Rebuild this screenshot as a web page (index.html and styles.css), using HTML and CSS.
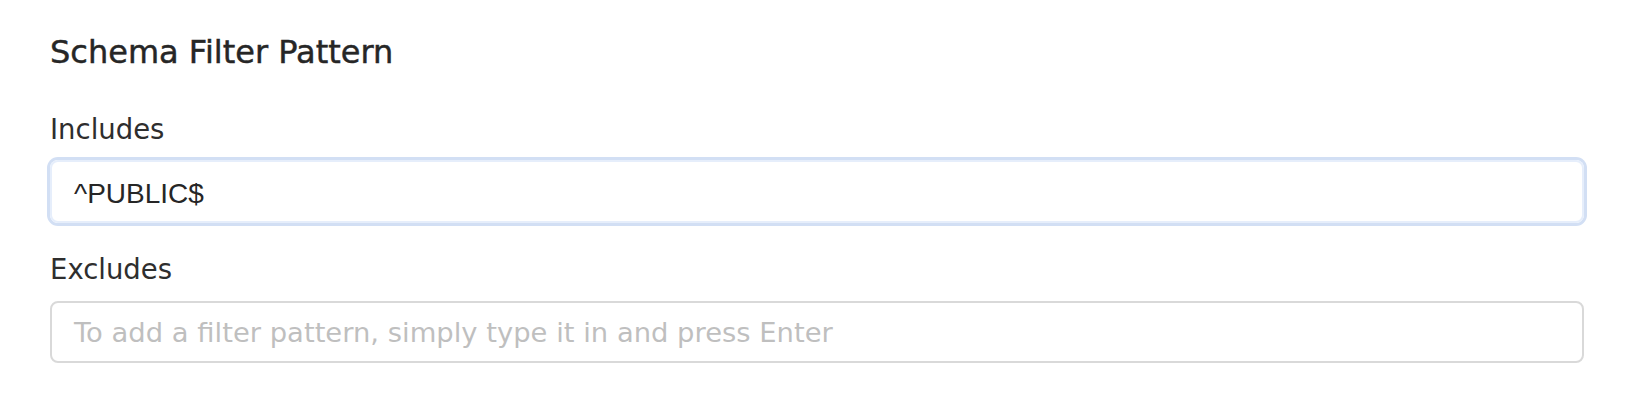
FILE: index.html
```html
<!DOCTYPE html>
<html>
<head>
<meta charset="utf-8">
<link rel="stylesheet" href="styles.css">
</head>
<body>
<div class="page">
  <h2 class="title">Schema Filter Pattern</h2>
  <div class="field">
    <label class="label">Includes</label>
    <div class="input focused"><span class="value">^PUBLIC$</span></div>
  </div>
  <div class="field">
    <label class="label">Excludes</label>
    <div class="input"><span class="placeholder">To add a filter pattern, simply type it in and press Enter</span></div>
  </div>
</div>
</body>
</html>
```
FILE: styles.css
```css
html, body { margin: 0; padding: 0; background: #fff; }
.page {
  padding: 32px 0 0 50px;
  width: 1534px;
  font-family: "DejaVu Sans", Verdana, sans-serif;
}
.title {
  margin: 0;
  font-size: 32px;
  font-weight: normal;
  -webkit-text-stroke: 0.45px #262626;
  line-height: 40px;
  color: #262626;
}
.field { display: flex; flex-direction: column; }
.field + .field { margin-top: 28.5px; }
.label {
  margin-top: 39px;
  font-size: 27.5px;
  line-height: 36px;
  color: #2e2e2e;
}
.field + .field .label { margin-top: 0; }
.input {
  margin-top: 12.5px;
  height: 62px;
  box-sizing: border-box;
  border: 2px solid #d9d9d9;
  border-radius: 8px;
  display: flex;
  align-items: center;
  padding: 0 22px;
}
.field + .field .input { margin-top: 14px; }
.input.focused {
  height: 63px;
  border-color: #e6eefb;
  box-shadow: 0 0 0 3px #d2dff4;
  padding-top: 5px;
}
.value {
  font-family: "Liberation Sans", Arial, sans-serif;
  font-size: 28px;
  color: #262626;
}
.placeholder {
  font-size: 27.4px;
  color: #bfbfbf;
}
```
